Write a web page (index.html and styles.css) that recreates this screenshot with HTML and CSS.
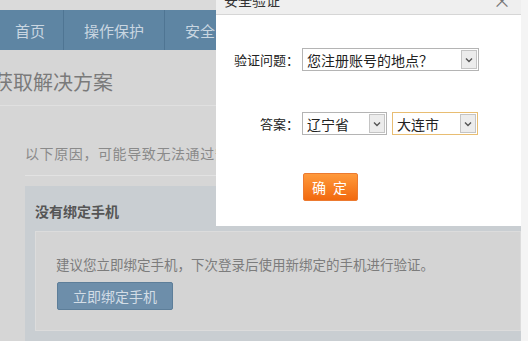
FILE: index.html
```html
<!DOCTYPE html>
<html lang="zh-CN">
<head>
<meta charset="utf-8">
<title>安全验证</title>
<link rel="stylesheet" href="styles.css">
</head>
<body>
<div class="screen">
  <div class="page">
    <div class="topgap"></div>
    <nav class="nav">
      <span class="nav-item first">首页</span>
      <span class="nav-item">操作保护</span>
      <span class="nav-item">安全中心</span>
    </nav>
    <h1 class="heading">获取解决方案</h1>
    <div class="section">
      <p class="reasons">以下原因，可能导致无法通过安全验证</p>
      <div class="case">
        <h2 class="case-title">没有绑定手机</h2>
        <div class="case-body">
          <p class="case-text">建议您立即绑定手机，下次登录后使用新绑定的手机进行验证。</p>
          <span class="bind-btn">立即绑定手机</span>
        </div>
      </div>
    </div>
  </div>
  <div class="edge"></div>

  <div class="dialog">
    <div class="dialog-title">
      <span class="dialog-title-text">安全验证</span>
      <span class="dialog-close">×</span>
    </div>
    <div class="dialog-body">
      <div class="form-row row-question">
        <span class="label">验证问题：</span>
        <span class="select sel-question">
          <span class="select-text">您注册账号的地点？</span>
          <span class="select-arrow"><svg width="8" height="6" viewBox="0 0 8 6"><path d="M1 1.5 L4 4.5 L7 1.5" fill="none" stroke="#555" stroke-width="1.4"/></svg></span>
        </span>
      </div>
      <div class="form-row row-answer">
        <span class="label">答案：</span>
        <span class="select sel-province">
          <span class="select-text">辽宁省</span>
          <span class="select-arrow"><svg width="8" height="6" viewBox="0 0 8 6"><path d="M1 1.5 L4 4.5 L7 1.5" fill="none" stroke="#555" stroke-width="1.4"/></svg></span>
        </span>
        <span class="select sel-city focused">
          <span class="select-text">大连市</span>
          <span class="select-arrow"><svg width="8" height="6" viewBox="0 0 8 6"><path d="M1 1.5 L4 4.5 L7 1.5" fill="none" stroke="#555" stroke-width="1.4"/></svg></span>
        </span>
      </div>
      <span class="ok-btn">确 定</span>
    </div>
  </div>
</div>
</body>
</html>
```

FILE: styles.css
```css
* { box-sizing: border-box; }
html, body { margin: 0; padding: 0; }
body {
  width: 528px;
  height: 341px;
  overflow: hidden;
  font-family: "Noto Sans CJK SC", "Microsoft YaHei", sans-serif;
  background: #d6d6d6;
}
.screen {
  position: relative;
  display: flex;
  width: 528px;
  height: 341px;
  overflow: hidden;
}
.page {
  width: 521px;
  flex: none;
  background: #d6d6d6;
  overflow: hidden;
}
.edge {
  flex: 1;
  background: #f4f4f4;
}
.topgap {
  height: 10px;
  background: #dadada;
}
.nav {
  height: 40px;
  display: flex;
  background: #5e85a3;
  white-space: nowrap;
}
.nav-item {
  display: flex;
  align-items: center;
  padding: 0 20px;
  font-size: 15px;
  color: #c9d6e1;
  border-right: 1px solid #4f7593;
}
.nav-item.first { padding: 0 18px 0 15px; }
.heading {
  margin: 0 0 0 -7px;
  padding: 19px 0 10px;
  line-height: 26px;
  font-size: 20px;
  font-weight: normal;
  color: #7a7a7a;
  border-bottom: 1px solid #e0e0e0;
}
.section {
  margin-left: 25px;
}
.reasons {
  margin: 0;
  padding: 37px 0 12px;
  line-height: 20px;
  font-size: 14px;
  letter-spacing: 0.6px;
  color: #8a8a8a;
  white-space: nowrap;
  border-bottom: 1px solid #e2e2e2;
}
.case {
  margin-top: 10px;
  background: #c9ced2;
  padding: 15px 0 20px 10px;
}
.case-title {
  margin: 0 0 10px;
  line-height: 20px;
  font-size: 14px;
  font-weight: bold;
  color: #555;
}
.case-body {
  height: 100px;
  background: #d4d4d4;
  border: 1px solid #dcdcdc;
  padding: 22px 0 0 20px;
}
.case-text {
  margin: 0 0 8px;
  line-height: 20px;
  font-size: 13.5px;
  color: #7c7c7c;
  white-space: nowrap;
}
.bind-btn {
  display: inline-flex;
  align-items: center;
  justify-content: center;
  width: 116px;
  height: 28px;
  background: #6d8eaa;
  border: 1px solid #5d7e99;
  border-radius: 2px;
  font-size: 14px;
  color: #d3dde6;
  margin-left: 1px;
}

/* dialog overlay */
.dialog {
  position: absolute;
  left: 216px;
  top: 0;
  width: 305px;
  height: 226px;
  background: #ffffff;
}
.dialog-title {
  display: flex;
  justify-content: space-between;
  align-items: center;
  height: 29px;
  margin-top: -14px;
  padding: 0 10px 0 8px;
  background: #efefef;
  border-bottom: 1px solid #d6d6d6;
}
.dialog-title-text {
  font-size: 14px;
  color: #333;
}
.dialog-close {
  font-size: 18px;
  color: #777;
}
.dialog-body {
  padding-top: 33px;
}
.form-row {
  display: flex;
  align-items: center;
  gap: 5px;
}
.row-answer { margin-top: 41px; }
.label {
  width: 83px;
  margin-right: -2px;
  text-align: right;
  font-size: 13px;
  color: #222;
}
.select {
  display: flex;
  align-items: center;
  justify-content: space-between;
  height: 23px;
  border: 1px solid #b4b4b4;
  padding: 0 1px 0 4px;
  background: #fff;
}
.sel-question { width: 177px; }
.sel-province { width: 85px; }
.sel-city { width: 86px; }
.select.focused { border-color: #e8bd72; }
.select-text {
  font-size: 14px;
  color: #222;
  white-space: nowrap;
}
.select-arrow {
  display: flex;
  align-items: center;
  justify-content: center;
  width: 16px;
  height: 19px;
  background: #ececec;
  border: 1px solid #c4c4c4;
}
.ok-btn {
  display: inline-flex;
  align-items: center;
  justify-content: center;
  margin: 38px 0 0 87px;
  width: 55px;
  height: 28px;
  background: linear-gradient(#ff9a3c, #f2690e);
  border: 1px solid #ec7a30;
  border-radius: 2px;
  font-size: 14px;
  letter-spacing: 2px;
  color: #fff;
  white-space: pre;
}
```
